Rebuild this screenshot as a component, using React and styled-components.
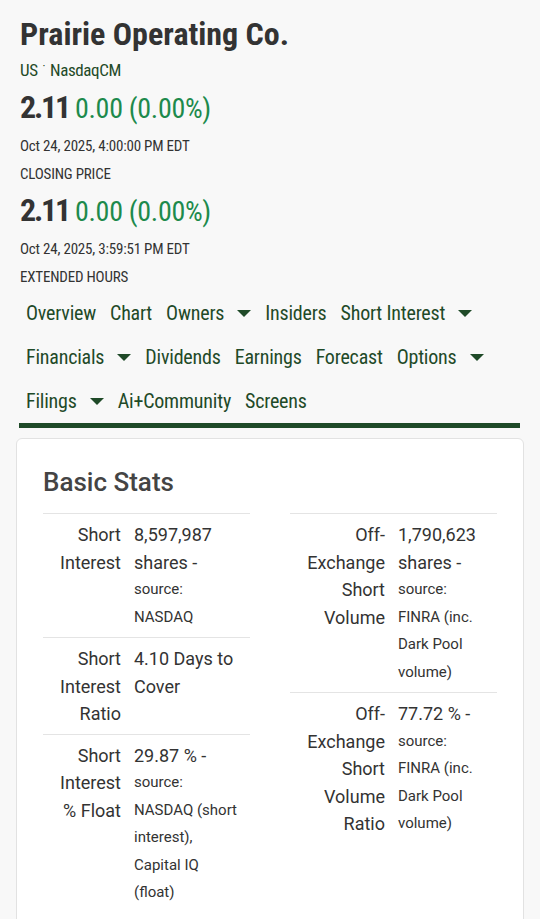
import styled, { createGlobalStyle } from 'styled-components';

const GlobalStyle = createGlobalStyle`
  html, body {
    margin: 0;
    padding: 0;
    background: #f8f8f8;
  }
  body {
    font-family: Roboto, "Liberation Sans", sans-serif;
    color: #333;
  }
`;

const COND = `"Roboto Condensed", "DejaVu Sans Condensed", sans-serif`;

const Page = styled.div`
  padding: 12px 16px 0 16px;
`;

const Header = styled.div`
  padding-left: 4px;
`;

const Title = styled.h1`
  margin: 0;
  font-family: ${COND};
  font-weight: 700;
  font-size: 32px;
  line-height: 44px;
  color: #333;
`;

const Exchange = styled.div`
  margin-top: 2px;
  font-family: ${COND};
  font-size: 17px;
  letter-spacing: -0.4px;
  line-height: 24px;
  color: #1f4a28;
`;

const Dot = styled.span`
  position: relative;
  top: -6px;
  margin: 0 5px;
  font-size: 12px;
`;

const PriceRow = styled.div`
  display: flex;
  align-items: baseline;
  gap: 6px;
  font-family: ${COND};
  margin: ${({ $top }) => $top}px 0 4px 0;
  line-height: 38px;
`;

const Price = styled.span`
  font-size: 32px;
  font-weight: 700;
  letter-spacing: -2.2px;
  color: #333;
`;

const Change = styled.span`
  font-size: 28px;
  letter-spacing: -0.3px;
  color: #1d8a4c;
`;

const Meta = styled.div`
  font-family: ${COND};
  font-size: 15px;
  letter-spacing: -0.2px;
  line-height: 28px;
  color: #333;
`;

const Nav = styled.nav`
  display: flex;
  flex-wrap: wrap;
  column-gap: 14px;
  margin: 0 4px 0 3px;
  padding: 0 4px 0 7px;
  border-bottom: 5px solid #1f4a28;
`;

const NavItem = styled.a`
  display: flex;
  align-items: center;
  gap: 13px;
  font-family: ${COND};
  font-size: 20px;
  letter-spacing: -0.2px;
  line-height: 44px;
  color: #1f4a28;
  text-decoration: none;
`;

const Caret = styled.span`
  width: 0;
  height: 0;
  border-left: 7px solid transparent;
  border-right: 7px solid transparent;
  border-top: 7px solid #1f4a28;
`;

const Card = styled.section`
  margin-top: 10px;
  background: #fff;
  border: 1px solid #e2e2e2;
  border-radius: 6px;
  padding: 26px 26px 20px 26px;
`;

const CardTitle = styled.h2`
  margin: 0 0 14px 0;
  font-family: Roboto, sans-serif;
  font-weight: 500;
  font-size: 26px;
  line-height: 34px;
  color: #444;
`;

const Columns = styled.div`
  display: grid;
  grid-template-columns: minmax(0, 1fr) minmax(0, 1fr);
  column-gap: 40px;
  align-items: start;
`;

const Table = styled.div`
  display: flex;
  flex-direction: column;
`;

const Row = styled.div`
  display: grid;
  grid-template-columns: ${({ $labelWidth }) => $labelWidth}px ${({ $valueWidth }) => $valueWidth}px;
  column-gap: 13px;
  justify-content: start;
  border-top: 1px solid #e4e4e4;
  padding: 7px 0 6px ${({ $indent }) => $indent}px;
`;

const Label = styled.div`
  text-align: right;
  font-size: 18px;
  line-height: 27.5px;
  color: #333;
`;

const Value = styled.div`
  font-size: 18px;
  line-height: 27.5px;
  color: #333;
`;

const Source = styled.div`
  font-size: 15px;
  line-height: 27.5px;
`;

const navItems = [
  ['Overview'], ['Chart'], ['Owners', true], ['Insiders'], ['Short Interest', true],
  ['Financials', true], ['Dividends'], ['Earnings'], ['Forecast'], ['Options', true],
  ['Filings', true], ['Ai+Community'], ['Screens'],
];

const left = [
  { label: 'Short Interest', value: '8,597,987 shares -', source: 'source: NASDAQ' },
  { label: 'Short Interest Ratio', value: '4.10 Days to Cover' },
  { label: 'Short Interest % Float', value: '29.87 % -', source: 'source: NASDAQ (short interest), Capital IQ (float)' },
];

const right = [
  { label: 'Off-Exchange Short Volume', value: '1,790,623 shares -', source: 'source: FINRA (inc. Dark Pool volume)' },
  { label: 'Off-Exchange Short Volume Ratio', value: '77.72 % -', source: 'source: FINRA (inc. Dark Pool volume)' },
];

function StatTable({ rows, labelWidth, valueWidth, indent }) {
  return (
    <Table>
      {rows.map((r) => (
        <Row key={r.label} $labelWidth={labelWidth} $valueWidth={valueWidth} $indent={indent}>
          <Label>{r.label}</Label>
          <Value>
            {r.value}
            {r.source && <Source>{r.source}</Source>}
          </Value>
        </Row>
      ))}
    </Table>
  );
}

export default function App() {
  return (
    <>
      <GlobalStyle />
      <Page>
        <Header>
          <Title>Prairie Operating Co.</Title>
          <Exchange>US<Dot>·</Dot>NasdaqCM</Exchange>
          <PriceRow $top={4}>
            <Price>2.11</Price>
            <Change>0.00 (0.00%)</Change>
          </PriceRow>
          <Meta>Oct 24, 2025, 4:00:00 PM EDT</Meta>
          <Meta>CLOSING PRICE</Meta>
          <PriceRow $top={3}>
            <Price>2.11</Price>
            <Change>0.00 (0.00%)</Change>
          </PriceRow>
          <Meta>Oct 24, 2025, 3:59:51 PM EDT</Meta>
          <Meta>EXTENDED HOURS</Meta>
        </Header>
        <Nav>
          {navItems.map(([name, drop]) => (
            <NavItem key={name} href="#">
              {name}
              {drop && <Caret />}
            </NavItem>
          ))}
        </Nav>
        <Card>
          <CardTitle>Basic Stats</CardTitle>
          <Columns>
            <StatTable rows={left} labelWidth={72} valueWidth={104} indent={6} />
            <StatTable rows={right} labelWidth={95} valueWidth={90} indent={0} />
          </Columns>
        </Card>
      </Page>
    </>
  );
}
